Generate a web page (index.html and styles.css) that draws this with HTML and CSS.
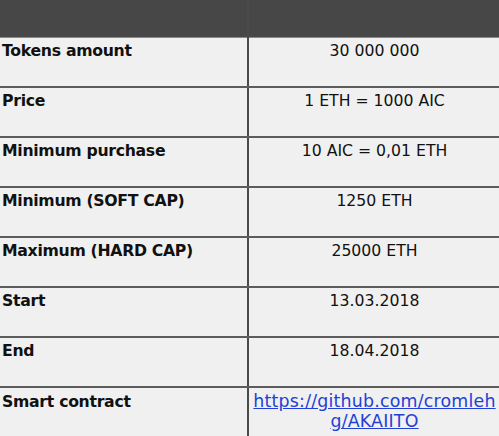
FILE: index.html
```html
<!DOCTYPE html>
<html>
<head>
<meta charset="utf-8">
<link rel="stylesheet" href="styles.css">
</head>
<body>
<table class="ico">
  <tr class="head"><td class="k"></td><td class="v"></td></tr>
  <tr><td class="k">Tokens amount</td><td class="v">30 000 000</td></tr>
  <tr><td class="k">Price</td><td class="v">1 ETH = 1000 AIC</td></tr>
  <tr><td class="k">Minimum purchase</td><td class="v">10 AIC = 0,01 ETH</td></tr>
  <tr><td class="k">Minimum (SOFT CAP)</td><td class="v">1250 ETH</td></tr>
  <tr><td class="k">Maximum (HARD CAP)</td><td class="v">25000 ETH</td></tr>
  <tr><td class="k">Start</td><td class="v">13.03.2018</td></tr>
  <tr><td class="k">End</td><td class="v">18.04.2018</td></tr>
  <tr class="last"><td class="k">Smart contract</td><td class="v"><a class="link" href="#">https://github.com/cromleh<br>g/AKAIITO</a></td></tr>
</table>
</body>
</html>
```
FILE: styles.css
```css
html, body {
  margin: 0;
  padding: 0;
  background: #f0f0f0;
  overflow: hidden;
}
.ico {
  border-collapse: collapse;
  width: 500px;
  table-layout: fixed;
  font-family: "DejaVu Sans", sans-serif;
  font-size: 15.7px;
  color: #111;
}
.ico td {
  border-bottom: 2px solid #5c5c5c;
  height: 50px;
  vertical-align: top;
  padding: 3px 2px 0 2px;
  box-sizing: border-box;
  line-height: 20px;
}
.ico tr td.k {
  width: 248px;
  border-right: 2px solid #4a4a4a;
  font-weight: bold;
  letter-spacing: -0.3px;
}
.ico td.v {
  text-align: center;
}
.ico tr.head td {
  background: #474747;
  height: 37px;
  border-bottom: 1px solid #8a8a8a;
}
.ico tr.row-gap td {
  height: 51px;
}
.ico tr.last td {
  border-bottom: none;
  height: 70px;
  padding-top: 4px;
}
.link {
  color: #2340d6;
  text-decoration: underline;
  font-size: 17.4px;
  line-height: 19px;
  letter-spacing: 0.2px;
}
```
